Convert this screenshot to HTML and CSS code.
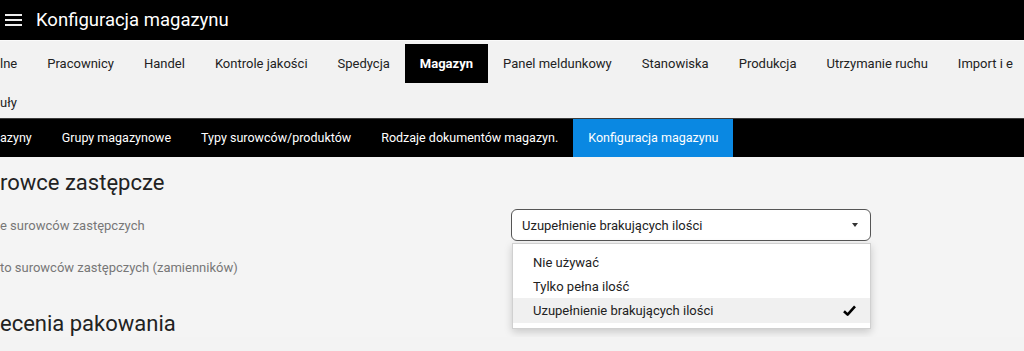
FILE: index.html
```html
<!DOCTYPE html>
<html lang="pl">
<head>
    <meta charset="UTF-8">
    <meta name="viewport" content="width=device-width, initial-scale=1.0">
    <title>Konfiguracja magazynu</title>
    <link rel="stylesheet" href="styles.css">
</head>
<body>
    <header class="topbar">
        <span class="burger"><i></i><i></i><i></i></span>
        <span class="topbar-title">Konfiguracja magazynu</span>
    </header>

    <nav class="modules">
        <a class="module cut">lne</a>
        <a class="module">Pracownicy</a>
        <a class="module">Handel</a>
        <a class="module">Kontrole jakości</a>
        <a class="module">Spedycja</a>
        <a class="module active">Magazyn</a>
        <a class="module">Panel meldunkowy</a>
        <a class="module">Stanowiska</a>
        <a class="module">Produkcja</a>
        <a class="module">Utrzymanie ruchu</a>
        <a class="module">Import i e</a>
        <a class="module cut">uły</a>
    </nav>

    <nav class="tabs">
        <a class="tab cut">azyny</a>
        <a class="tab">Grupy magazynowe</a>
        <a class="tab">Typy surowców/produktów</a>
        <a class="tab">Rodzaje dokumentów magazyn.</a>
        <a class="tab active">Konfiguracja magazynu</a>
    </nav>

    <main class="content">
        <h2 class="section-title">rowce zastępcze</h2>

        <div class="form-row">
            <label class="form-label">e surowców zastępczych</label>
            <div class="select-wrap">
                <div class="select">
                    <span>Uzupełnienie brakujących ilości</span>
                    <span class="caret"></span>
                </div>
                <ul class="dropdown">
                    <li>Nie używać</li>
                    <li>Tylko pełna ilość</li>
                    <li class="selected">
                        Uzupełnienie brakujących ilości
                        <svg class="check" width="13" height="11" viewBox="0 0 13 11">
                            <path d="M1 6.2 L4.6 9.6 L12 1.4" fill="none" stroke="#000" stroke-width="2.6" stroke-linejoin="round"/>
                        </svg>
                    </li>
                </ul>
            </div>
        </div>

        <div class="form-row">
            <label class="form-label">to surowców zastępczych (zamienników)</label>
        </div>

        <h2 class="section-title second">ecenia pakowania</h2>
    </main>
</body>
</html>
```

FILE: styles.css
```css
* {
    box-sizing: border-box;
}
body {
    margin: 0;
    font-family: Roboto, "DejaVu Sans", sans-serif;
    font-size: 13px;
    color: #222;
    background-color: #f3f3f3;
    overflow: hidden;
}
a {
    color: inherit;
    text-decoration: none;
}

/* top bar */
.topbar {
    height: 40px;
    background-color: #000;
    color: #fff;
    display: flex;
    align-items: center;
    padding-left: 5px;
}
.burger {
    display: flex;
    flex-direction: column;
    gap: 3px;
    width: 17px;
    margin-right: 14px;
}
.burger i {
    display: block;
    height: 2px;
    background-color: #eee;
}
.topbar-title {
    font-size: 18.5px;
}

/* module navigation */
.modules {
    display: flex;
    flex-wrap: wrap;
    width: 1036px;
    height: 78px;
    overflow: hidden;
    padding-top: 3px;
    background-color: #f2f2f2;
    border-top: 1px solid #fafafa;
}
.module {
    height: 39px;
    line-height: 39px;
    padding: 0 15px;
    white-space: nowrap;
}
.module.cut {
    padding-left: 0;
}
.module.active {
    background-color: #000;
    color: #fff;
    font-weight: 700;
}

/* sub tabs */
.tabs {
    display: flex;
    height: 39px;
    background-color: #000;
    border-top: 1px solid #3c3c3c;
    color: #fff;
    font-size: 12.5px;
}
.tab {
    line-height: 38px;
    padding: 0 15px;
    white-space: nowrap;
}
.tab.cut {
    padding-left: 0;
}
.tab.active {
    background-color: #0a88e2;
}

/* content */
.content {
    background-color: #f4f4f4;
}
.section-title {
    margin: 0;
    padding-top: 13px;
    font-size: 22px;
    font-weight: 400;
    line-height: 26px;
}
.section-title.second {
    padding-top: 23px;
}
.form-row {
    display: flex;
    align-items: center;
    height: 42px;
}
.form-row:first-of-type {
    margin-top: 8px;
}
.form-label {
    width: 511px;
    color: #777;
}
.select-wrap {
    position: relative;
    width: 360px;
}
.select {
    height: 32px;
    display: flex;
    align-items: center;
    justify-content: space-between;
    padding: 0 12px 0 10px;
    border: 1px solid #555;
    border-radius: 6px;
    background-color: #fff;
}
.caret {
    width: 0;
    height: 0;
    border-left: 3px solid transparent;
    border-right: 3px solid transparent;
    border-top: 4px solid #333;
}
.dropdown {
    position: absolute;
    top: 34px;
    left: 1px;
    right: 0;
    margin: 0;
    padding: 6px 0 5px;
    list-style: none;
    background-color: #fff;
    border: 1px solid #d0d0d0;
    box-shadow: 0 3px 8px rgba(0, 0, 0, 0.18);
}
.dropdown li {
    height: 24px;
    display: flex;
    align-items: center;
    justify-content: space-between;
    padding: 0 14px 0 20px;
}
.dropdown li.selected {
    height: 25px;
    background-color: #f0f0f0;
}
```
